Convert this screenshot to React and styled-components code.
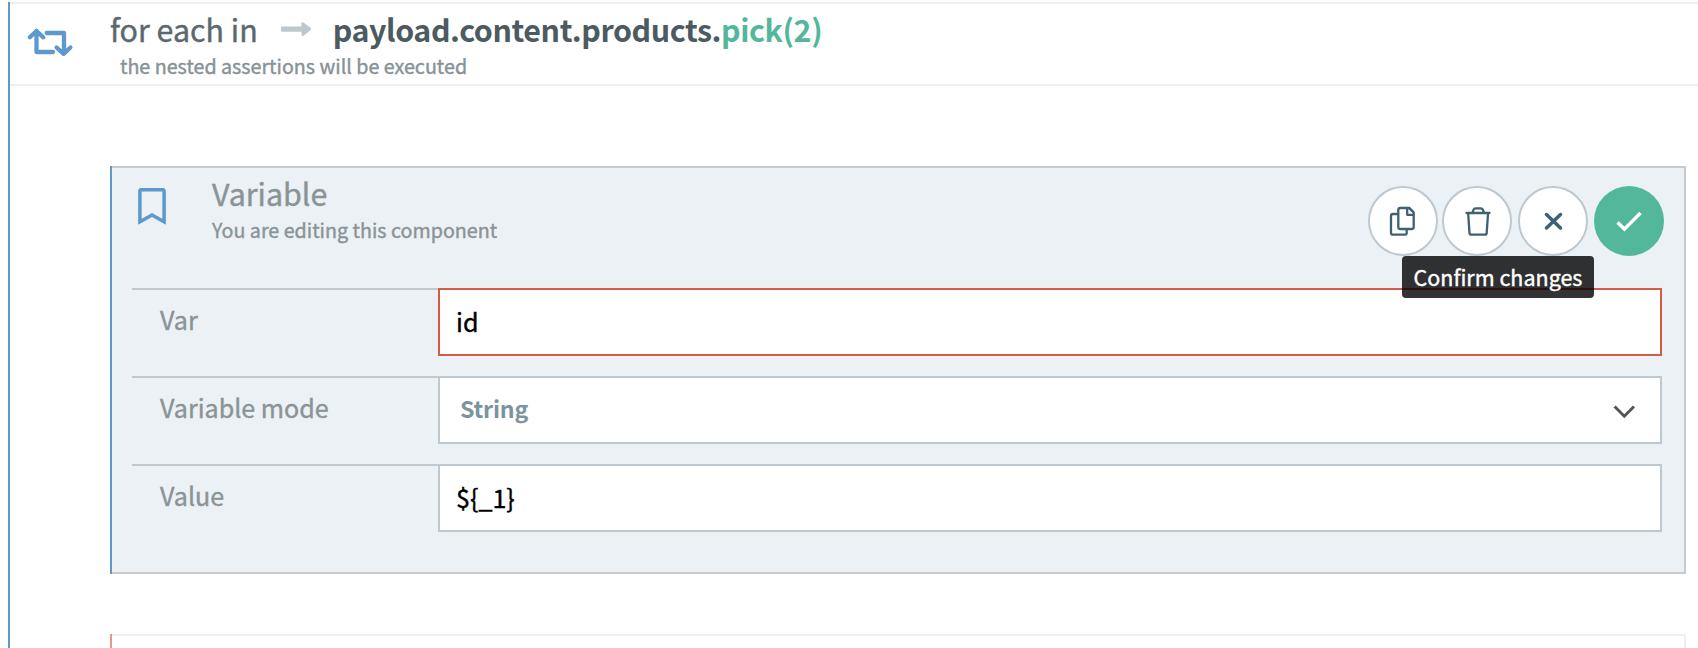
import React from "react";
import styled, { createGlobalStyle } from "styled-components";

const GlobalStyle = createGlobalStyle`
  * { box-sizing: border-box; }
  body {
    margin: 0;
    background: #fff;
    font-family: "Noto Sans CJK SC", "Noto Sans", sans-serif;
    -webkit-text-stroke: 0.4px currentColor;
  }
`;

const Page = styled.div`
  height: 648px;
  padding: 2px 0 0 8px;
  overflow: hidden;
`;

const Loop = styled.section`
  height: 646px;
  border-left: 2px solid #5e98cc;
`;

const LoopHeader = styled.header`
  display: flex;
  height: 84px;
  border-top: 2px solid #eee;
  border-bottom: 2px solid #eee;
`;

const LoopIcon = styled.div`
  width: 100px;
  padding: 23px 0 0 16px;
`;

const Icon = styled.svg`
  display: block;
  fill: none;
  stroke: currentColor;
  stroke-width: ${(p) => p.$weight || 2.3};
  stroke-linecap: ${(p) => p.$cap || "round"};
  stroke-linejoin: ${(p) => p.$join || "round"};
  color: ${(p) => p.$color || "#3f6270"};
`;

const LoopTitle = styled.div`
  display: flex;
  align-items: center;
  height: 50px;
  font-size: 30.4px;
  line-height: 50px;
  color: #5b686e;
  white-space: pre;
`;

const LoopArrow = styled.svg`
  display: block;
  margin: 0 21px 0 22px;
`;

const Path = styled.span`
  font-weight: 700;
  letter-spacing: -0.41px;
  color: #4c5a62;
  -webkit-text-stroke: 0;
`;

const Method = styled.span`
  color: #53b89b;
`;

const LoopNote = styled.div`
  padding-left: 10px;
  font-size: 19.7px;
  line-height: 26px;
  margin-top: -1px;
  color: #879297;
`;

const LoopBody = styled.div`
  padding: 80px 12px 0 100px;
`;

const AccentCard = styled.div`
  display: flex;
  margin-bottom: 60px;
  &::before {
    content: "";
    width: 2px;
    background: ${(p) => p.$accent};
  }
`;

const EditorCard = styled.article`
  flex: 1;
  height: 408px;
  padding: 0 22px 0 20px;
  background: #ecf1f5;
  border: 2px solid #c8cacb;
  border-left: 0;
`;

const NextCard = styled.article`
  flex: 1;
  height: 100px;
  border: 2px solid #eee;
  border-left: 0;
`;

const CardHeader = styled.div`
  display: flex;
  height: 120px;
`;

const CardIcon = styled.div`
  width: 80px;
  padding: 20px 0 0 6px;
`;

const CardHeading = styled.div`
  flex: 1;
`;

const CardTitle = styled.div`
  margin-top: 5px;
  font-size: 30.4px;
  line-height: 40px;
  color: #8a9496;
`;

const CardNote = styled.div`
  margin-top: 1px;
  font-size: 19.7px;
  line-height: 32px;
  color: #8a9496;
`;

const Actions = styled.div`
  display: flex;
  gap: 6px;
  height: 70px;
  margin: 18px -2px 0 0;
`;

const ActionButton = styled.button`
  position: relative;
  width: 70px;
  height: 70px;
  padding: 0;
  border: ${(p) => (p.$primary ? "0" : "2px solid #bdc8cf")};
  border-radius: 50%;
  background: ${(p) => (p.$primary ? "#53b89b" : "#fff")};
  font: inherit;
  margin-right: ${(p) => (p.$tight ? "-2px" : "0")};

  ${Icon} {
    margin: ${(p) => (p.$primary ? "0" : "-2px")};
  }
`;

const Tooltip = styled.span`
  position: absolute;
  top: 70px;
  right: 70px;
  z-index: 1;
  width: 192px;
  height: 42px;
  border-radius: 4px;
  background: rgba(0, 0, 0, 0.8);
  color: #fff;
  font-size: 21.5px;
  line-height: 42px;
  text-align: center;
  white-space: nowrap;
`;

const Field = styled.div`
  display: flex;
  height: 68px;
  margin-bottom: 20px;
`;

const FieldLabel = styled.label`
  width: 306px;
  padding-left: 28px;
  border-top: 2px solid #bdc8cf;
  font-size: 25.1px;
  line-height: 58px;
  color: #8a9496;
`;

const Control = styled.div`
  display: flex;
  justify-content: space-between;
  flex: 1;
  padding: 0 25px 0 ${(p) => (p.$select ? 20 : 16)}px;
  background: #fff;
  border: 2px solid ${(p) => (p.$invalid ? "#d55b47" : "#bdc8cf")};
  font-size: ${(p) => (p.$select ? 23.2 : 25.1)}px;
  font-weight: ${(p) => (p.$select ? 700 : 400)};
  letter-spacing: ${(p) => (p.$select ? "-0.2px" : "0")};
  line-height: ${(p) => (p.$select ? 60 : 62)}px;
  color: ${(p) => (p.$select ? "#7c949e" : "#000")};
  -webkit-text-stroke-width: ${(p) => (p.$select ? 0 : 0.4)}px;

  ${Icon} {
    margin-top: 26px;
  }
`;

export default function App() {
  return (
    <Page>
      <GlobalStyle />
      <Loop>
        <LoopHeader>
          <LoopIcon>
            <Icon width="48" height="32" viewBox="26 27 48 32" $weight={4.3} $color="#5e98cc">
              <path d="M29.8 37.3 36.5 31l6.800 6.300M36.500 31v21H53M46.700 33H64v20.500M56.600 47.500l7 6.300 6.800-6.300" />
            </Icon>
          </LoopIcon>
          <div>
            <LoopTitle>
              <span>for each in</span>
              <LoopArrow width="32" height="16" viewBox="280 21 32 16">
                <path
                  d="M282 26.600h19.500v-3.100q0-2.500 2-1l7 5.300q1 1.200 0 2.400l-7 5.500q-2 1-2-1v-3H282q-1 0-1-1v-3.100q0-1 1-1z"
                  fill="#bdc8cd"
                />
              </LoopArrow>
              <Path>
                payload.content.products.<Method>pick(2)</Method>
              </Path>
            </LoopTitle>
            <LoopNote>the nested assertions will be executed</LoopNote>
          </div>
        </LoopHeader>
        <LoopBody>
          <AccentCard $accent="#5e98cc">
            <EditorCard>
              <CardHeader>
                <CardIcon>
                  <Icon width="28" height="38" viewBox="138 188 28 38" $weight={3.5} $cap="butt" $join="miter" $color="#5e98cc">
                    <path d="M139.900 221.700V191.500q0-1.800 1.800-1.800h20.600q1.800 0 1.800 1.800v30.200L152 215z" />
                  </Icon>
                </CardIcon>
                <CardHeading>
                  <CardTitle>Variable</CardTitle>
                  <CardNote>You are editing this component</CardNote>
                </CardHeading>
                <Actions>
                  <ActionButton $tight>
                    <Icon width="70" height="70">
                      <path d="M32.300 22h9.200l4.200 4.200V41q0 2-2 2H32.300q-2 0-2-2V24q0-2 2-2zM39.200 22.500V28.800H45.500M41.500 22.500l4 4M30 28h-5q-2 0-2 2v16.700q0 2 2 2h11.700q2 0 2-2V43.500" />
                    </Icon>
                  </ActionButton>
                  <ActionButton>
                    <Icon width="70" height="70">
                      <path d="M24.500 27h23M30.500 26.500l1-2.700q.6-1.500 2.200-1.500h5q1.600 0 2.200 1.500l1 2.700M26.200 28l1.300 18.900q.1 1.800 1.900 1.800h13.400q1.800 0 1.900-1.800L46 28" />
                    </Icon>
                  </ActionButton>
                  <ActionButton>
                    <Icon width="70" height="70" $weight={3.5}>
                      <path d="M28.500 28.500 42.500 42M42.500 28.500 28.500 42" />
                    </Icon>
                  </ActionButton>
                  <ActionButton $primary>
                    <Icon width="70" height="70" $weight={3.4} $cap="butt" $join="miter" $color="#fff">
                      <path d="M23.600 36.600l6.800 6.500L46.500 27" />
                    </Icon>
                    <Tooltip>Confirm changes</Tooltip>
                  </ActionButton>
                </Actions>
              </CardHeader>
              <Field>
                <FieldLabel>Var</FieldLabel>
                <Control $invalid>id</Control>
              </Field>
              <Field>
                <FieldLabel>Variable mode</FieldLabel>
                <Control $select>
                  String
                  <Icon width="22" height="16" viewBox="1613 404 22 16" $weight={3} $cap="butt" $join="miter" $color="#555">
                    <path d="M1614.600 406.500l9.700 9.700 9.700-9.700" />
                  </Icon>
                </Control>
              </Field>
              <Field>
                <FieldLabel>Value</FieldLabel>
                <Control>{"${_1}"}</Control>
              </Field>
            </EditorCard>
          </AccentCard>
          <AccentCard $accent="#e8958a">
            <NextCard />
          </AccentCard>
        </LoopBody>
      </Loop>
    </Page>
  );
}
